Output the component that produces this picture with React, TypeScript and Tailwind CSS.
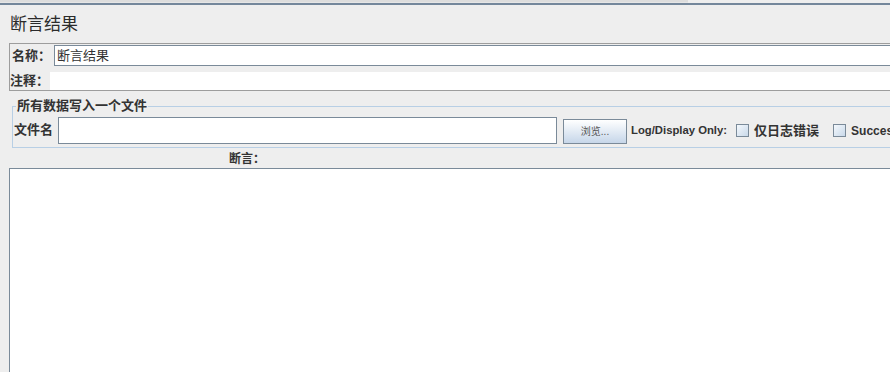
const cjk = "font-['Liberation_Sans','Noto_Sans_CJK_SC',sans-serif]";

function Checkbox() {
    return (
        <span className="inline-block w-[13px] h-[13px] border border-[#7a8a99] bg-gradient-to-br from-[#f4f8fc] to-[#c9d9ea] shrink-0" />
    );
}

export default function App() {
    return (
        <div className={`w-[890px] h-[372px] overflow-hidden bg-[#eeeeee] text-[#333333] ${cjk}`}>
            <div className="flex h-[3px]">
                <div className="w-[688px] bg-[#dddddd] border-b border-[#e6e6e6]" />
            </div>
            <div className="h-[2px] bg-[#74879b]" />

            <h1 className="pl-[10px] pt-[11px] pb-[9px] text-[17px] leading-[18px] font-normal text-[#2b2b2b]">
                断言结果
            </h1>

            <div className="ml-[9px] w-[900px] border border-[#9d9d9d]">
                <div className="flex items-center pt-[1px] h-[22px]">
                    <span className="w-[44px] shrink-0 whitespace-nowrap pl-[2px] text-[13px] font-bold">名称：</span>
                    <div className="flex-1 h-[21px] bg-white border border-[#7a8a99] border-r-0 flex items-center pl-[2px] text-[13px]">
                        断言结果
                    </div>
                </div>
                <div className="flex items-center mt-[6px] h-[18px]">
                    <span className="w-[40px] shrink-0 whitespace-nowrap text-[13px] font-bold">注释：</span>
                    <div className="flex-1 h-[18px] bg-white" />
                </div>
            </div>

            <fieldset className="ml-[12px] mt-[8px] w-[900px] border border-[#b8cfe5] pl-[1px] pb-[3px]">
                <legend className="ml-[2px] px-[1px] text-[13px] leading-[14px] font-bold">
                    所有数据写入一个文件
                </legend>
                <div className="flex items-start mt-[4px] h-[27px] whitespace-nowrap">
                    <span className="mt-[6px] shrink-0 text-[13px] leading-[14px] font-bold">文件名</span>
                    <div className="ml-[5px] w-[499px] shrink-0 h-[27px] bg-white border border-[#7a8a99]" />
                    <button
                        type="button"
                        className="ml-[6px] mt-[2px] w-[64px] shrink-0 h-[25px] border border-[#7a8a99] bg-gradient-to-b from-[#ffffff] to-[#c6d6e9] text-[10px] text-[#555555]"
                    >
                        浏览...
                    </button>
                    <div className="ml-[4px] h-[27px] flex items-center shrink-0">
                        <span className="text-[11.3px] font-bold">Log/Display Only:</span>
                        <span className="ml-[9px] flex items-center">
                            <Checkbox />
                            <span className="ml-[5px] text-[13px] font-bold">仅日志错误</span>
                        </span>
                        <span className="ml-[14px] flex items-center">
                            <Checkbox />
                            <span className="ml-[5px] text-[12px] font-bold">Succes</span>
                        </span>
                    </div>
                </div>
            </fieldset>

            <div className="pl-[229px] pt-[4px] h-[20px] text-[12px] leading-[14px] font-bold">断言：</div>

            <div className="ml-[9px] w-[900px] h-[220px] bg-white border-t border-l border-[#7a8a99]" />
        </div>
    );
}
